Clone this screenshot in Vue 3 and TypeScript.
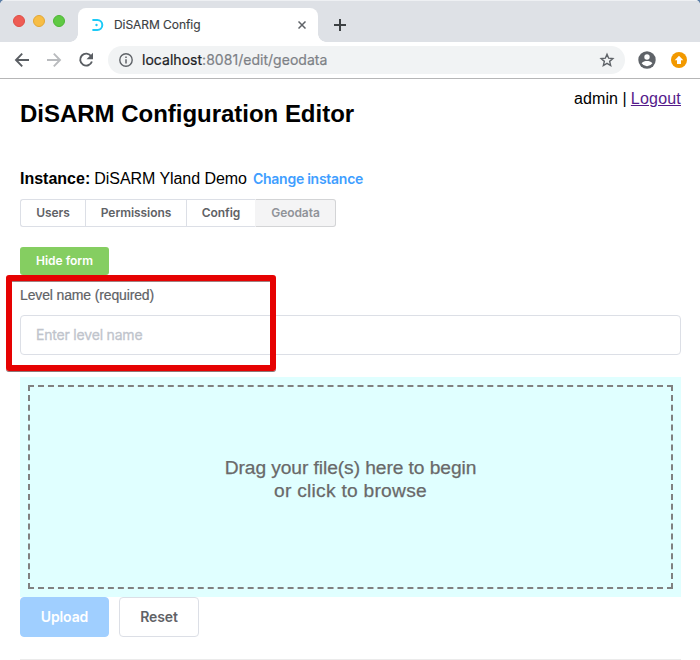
<script setup lang="ts">
import { ref } from 'vue'

interface Tab {
  label: string
  key: string
}

const tabs: Tab[] = [
  { label: 'Users', key: 'users' },
  { label: 'Permissions', key: 'permissions' },
  { label: 'Config', key: 'config' },
  { label: 'Geodata', key: 'geodata' },
]
const active = ref<string>('geodata')
const levelName = ref<string>('')
</script>

<template>
  <div class="window">
    <div class="tabstrip">
      <div class="lights"><i class="red"></i><i class="yellow"></i><i class="green"></i></div>
      <div class="tab">
        <svg class="favicon" width="14" height="14" viewBox="0 0 14 14">
          <path d="M1.400 2H6.300A5 5 0 0 1 6.300 12H1.400" fill="none" stroke="#1ccaf7" stroke-width="2" />
          <circle cx="5.500" cy="7" r="1.200" fill="#1ccaf7" />
        </svg>
        <span class="tab-title">DiSARM Config</span>
        <svg class="close" width="8" height="8" viewBox="0 0 8 8"><path d="M.5.5l7 7M7.500.500l-7 7" stroke="#5f6368" stroke-width="1.5" /></svg>
      </div>
      <svg class="plus" width="12" height="12" viewBox="0 0 12 12"><path d="M6 0v12M0 6h12" stroke="#3c4043" stroke-width="2" /></svg>
    </div>
    <div class="toolbar">
      <svg class="nav" width="16" height="16" viewBox="0 0 16 16"><path d="M15 8H2.500M8.200 1.700L2 8l6.200 6.300" fill="none" stroke="#5a5e63" stroke-width="1.9" /></svg>
      <svg class="nav" width="16" height="16" viewBox="0 0 16 16"><path d="M1 8h12.500M7.800 1.700L14 8l-6.200 6.300" fill="none" stroke="#b9bbbe" stroke-width="1.900" /></svg>
      <svg class="nav" width="16" height="16" viewBox="0 0 16 16">
        <path d="M13.200 4.300A6 6 0 1 0 13.900 9.500" fill="none" stroke="#5a5e63" stroke-width="1.900" />
        <path d="M15 .8v6.500H8.500z" fill="#5a5e63" />
      </svg>
      <div class="omnibox">
        <svg width="14" height="14" viewBox="0 0 14 14">
          <circle cx="7" cy="7" r="6.200" fill="none" stroke="#5f6368" stroke-width="1.400" />
          <path d="M7 6.200v4.300M7 3.400v1.600" stroke="#5f6368" stroke-width="1.500" />
        </svg>
        <span class="url"><b>localhost</b>:8081/edit/geodata</span>
        <svg class="star" width="16" height="16" viewBox="0 0 16 16"><path d="M8 2.300l1.650 3.900 4.200.35-3.200 2.800 1 4.150L8 11.300l-3.650 2.200 1-4.150-3.200-2.800 4.200-.35z" fill="none" stroke="#5f6368" stroke-width="1.400" /></svg>
      </div>
      <svg class="avatar" width="18" height="18" viewBox="0 0 18 18">
        <circle cx="9" cy="9" r="8.700" fill="#5f6368" />
        <circle cx="9" cy="6" r="2.700" fill="#fff" />
        <path d="M3.600 12.300c1-1.700 3.600-2.200 5.400-2.200s4.400.5 5.400 2.200A6.400 6.400 0 0 1 9 15.200a6.400 6.400 0 0 1-5.400-2.900z" fill="#fff" />
      </svg>
      <svg class="update" width="16" height="16" viewBox="0 0 16 16">
        <circle cx="8" cy="8" r="8" fill="#f29900" />
        <path d="M8 3.800l4.300 4.500h-2.300v3.700H6V8.300H3.700z" fill="#fff" />
      </svg>
    </div>
    <main class="page">
      <header class="head">
        <h1>DiSARM Configuration Editor</h1>
        <div class="user">admin | <a href="#">Logout</a></div>
      </header>
      <div class="instance">
        <strong>Instance:</strong><span class="name">DiSARM Yland Demo</span><span class="change">Change instance</span>
      </div>
      <nav class="group">
        <button v-for="t in tabs" :key="t.key" :class="[t.key, { active: t.key === active }]" @click="active = t.key">{{ t.label }}</button>
      </nav>
      <button class="hide">Hide form</button>
      <section class="form">
        <label for="level">Level name (required)</label>
        <input id="level" v-model="levelName" placeholder="Enter level name" />
        <div class="marker"></div>
      </section>
      <div class="drop">
        <div class="zone"><p><span class="l1">Drag your file(s) here to begin</span><br /><span class="l2">or click to browse</span></p></div>
      </div>
      <div class="actions">
        <button class="upload">Upload</button>
        <button class="reset">Reset</button>
      </div>
      <hr />
    </main>
  </div>
</template>

<style>
body {
  margin: 0;
  background: #5b7da5;
}
</style>

<style scoped>
* {
  box-sizing: border-box;
}
.window {
  height: 660px;
  overflow: hidden;
  background: #fff;
  border-radius: 5px 5px 0 0;
  font-family: 'Liberation Sans', Arial, sans-serif;
  color: #000;
}
svg {
  display: block;
  flex: none;
}
.tabstrip {
  height: 42px;
  background: #dee1e6;
  border-top: 1px solid #eef0f3;
  display: flex;
  align-items: flex-end;
}
.lights {
  display: flex;
  gap: 8px;
  padding-left: 13px;
  width: 78px;
  height: 41px;
  padding-top: 14px;
}
.lights i {
  width: 12px;
  height: 12px;
  border-radius: 50%;
}
.red {
  background: #ee5c54;
  border: 1px solid #df4d45;
}
.yellow {
  background: #f7bd45;
  border: 1px solid #e2a735;
}
.green {
  background: #5fc944;
  border: 1px solid #4db735;
}
.tab {
  position: relative;
  width: 240px;
  height: 34px;
  background: #fff;
  border-radius: 8px 8px 0 0;
  display: flex;
  align-items: center;
  padding: 0 12px 0 13px;
}
.tab::before,
.tab::after {
  content: '';
  position: absolute;
  bottom: 0;
  width: 8px;
  height: 8px;
}
.tab::before {
  left: -8px;
  background: radial-gradient(circle at 0 0, transparent 7.5px, #fff 8px);
}
.tab::after {
  right: -8px;
  background: radial-gradient(circle at 100% 0, transparent 7.5px, #fff 8px);
}
.tab-title {
  margin-left: 9px;
  font: 12px/16px Inter, sans-serif;
  letter-spacing: -0.06px;
  color: #3c4043;
  -webkit-text-stroke: 0.15px;
  flex: 1;
}
.plus {
  margin: 0 0 11px 16px;
}
.toolbar {
  height: 37px;
  border-bottom: 1px solid #b6b6b7;
  display: flex;
  align-items: center;
  padding-left: 14px;
}
.nav {
  margin-right: 16px;
}
.nav:nth-child(3) {
  margin-right: 14px;
}
.omnibox {
  width: 517px;
  height: 28px;
  border-radius: 14px;
  background: #f1f3f4;
  display: flex;
  align-items: center;
  padding: 0 10px 0 11px;
}
.url {
  margin-left: 9px;
  font: 14px/20px Inter, sans-serif;
  letter-spacing: 0.03px;
  color: #7d8186;
  -webkit-text-stroke: 0.2px;
  flex: 1;
}
.url b {
  font-weight: 400;
  color: #202124;
}
.avatar {
  margin-left: 13px;
}
.update {
  margin-left: 15px;
}
.page {
  padding: 0 19px 0 20px;
}
.head {
  display: flex;
  justify-content: space-between;
  height: 90px;
}
h1 {
  margin: 21px 0 0;
  font-size: 24px;
  line-height: 28px;
  letter-spacing: -0.02px;
}
.user {
  margin-top: 10px;
  font-size: 16px;
  line-height: 20px;
  letter-spacing: 0.08px;
}
.user a {
  color: #551a8b;
  letter-spacing: 0.2px;
  margin-left: -0.5px;
}
.instance {
  display: flex;
  align-items: center;
  height: 20px;
  font-size: 16px;
}
.name {
  margin-left: 4px;
  letter-spacing: -0.05px;
}
.change {
  margin-left: 6px;
  font: 600 14px/20px Inter, sans-serif;
  letter-spacing: -0.26px;
  color: #409eff;
}
button {
  display: block;
  font-family: Inter, sans-serif;
  margin: 0;
  padding: 0 0 2px;
  border: 1px solid #dcdfe6;
  background: #fff;
  color: #606266;
}
.group {
  display: flex;
  margin-top: 10px;
}
.group button {
  height: 28px;
  font-size: 12px;
  font-weight: 600;
  letter-spacing: -0.06px;
  border-right: 0;
}
.group .users {
  width: 65px;
  border-radius: 3px 0 0 3px;
}
.group .permissions {
  width: 101px;
}
.group .config {
  width: 69px;
}
.group .geodata {
  width: 81px;
  border: 1px solid #d3d4d6;
  border-left-color: #f4f4f5;
  border-radius: 0 3px 3px 0;
}
.group .active {
  background: #f4f4f5;
  color: #909399;
}
.hide {
  width: 89px;
  height: 28px;
  margin-top: 20px;
  border: 0;
  border-radius: 3px;
  background: #85ce61;
  color: #fff;
  font-size: 12px;
  font-weight: 600;
}
.form {
  position: relative;
}
.form label {
  display: block;
  height: 40px;
  line-height: 40px;
  font-size: 14px;
  letter-spacing: -0.14px;
  color: #606266;
  -webkit-text-stroke: 0.2px;
}
.form input {
  display: block;
  width: 100%;
  height: 40px;
  border: 1px solid #dcdfe6;
  border-radius: 4px;
  padding: 0 15px 2px;
  font: 14px Inter, sans-serif;
  letter-spacing: -0.19px;
}
.form input::placeholder {
  color: #c0c4cc;
  -webkit-text-stroke: 0.3px;
}
.marker {
  position: absolute;
  left: -14px;
  top: 0;
  width: 270px;
  height: 96px;
  border: 6px solid #e60202;
  border-radius: 3px;
  box-shadow: 0 1px 0 #8d7777, inset 0 1px 0 #a08080;
  pointer-events: none;
}
.drop {
  margin-top: 22px;
  height: 220px;
  padding: 8px;
  background: #e0ffff;
}
.zone {
  height: 204px;
  border: 2px dashed #808080;
  text-align: center;
}
.zone p {
  margin: 0;
  padding-top: 69px;
  font-size: 19.200px;
  line-height: 23px;
  color: #696969;
  -webkit-text-stroke: 0.25px;
}
.l1 {
  letter-spacing: -0.07px;
}
.l2 {
  letter-spacing: 0.26px;
}
.actions {
  display: flex;
  gap: 10px;
}
.actions button {
  height: 40px;
  border-radius: 4px;
  font-size: 14px;
  font-weight: 600;
  letter-spacing: -0.1px;
}
.actions .upload {
  width: 89px;
  background: #a0cfff;
  border-color: #a0cfff;
  color: #fff;
}
.actions .reset {
  width: 80px;
}
hr {
  height: 1px;
  margin: 22px 0 0;
  border: 0;
  background: #ebebeb;
}
</style>
